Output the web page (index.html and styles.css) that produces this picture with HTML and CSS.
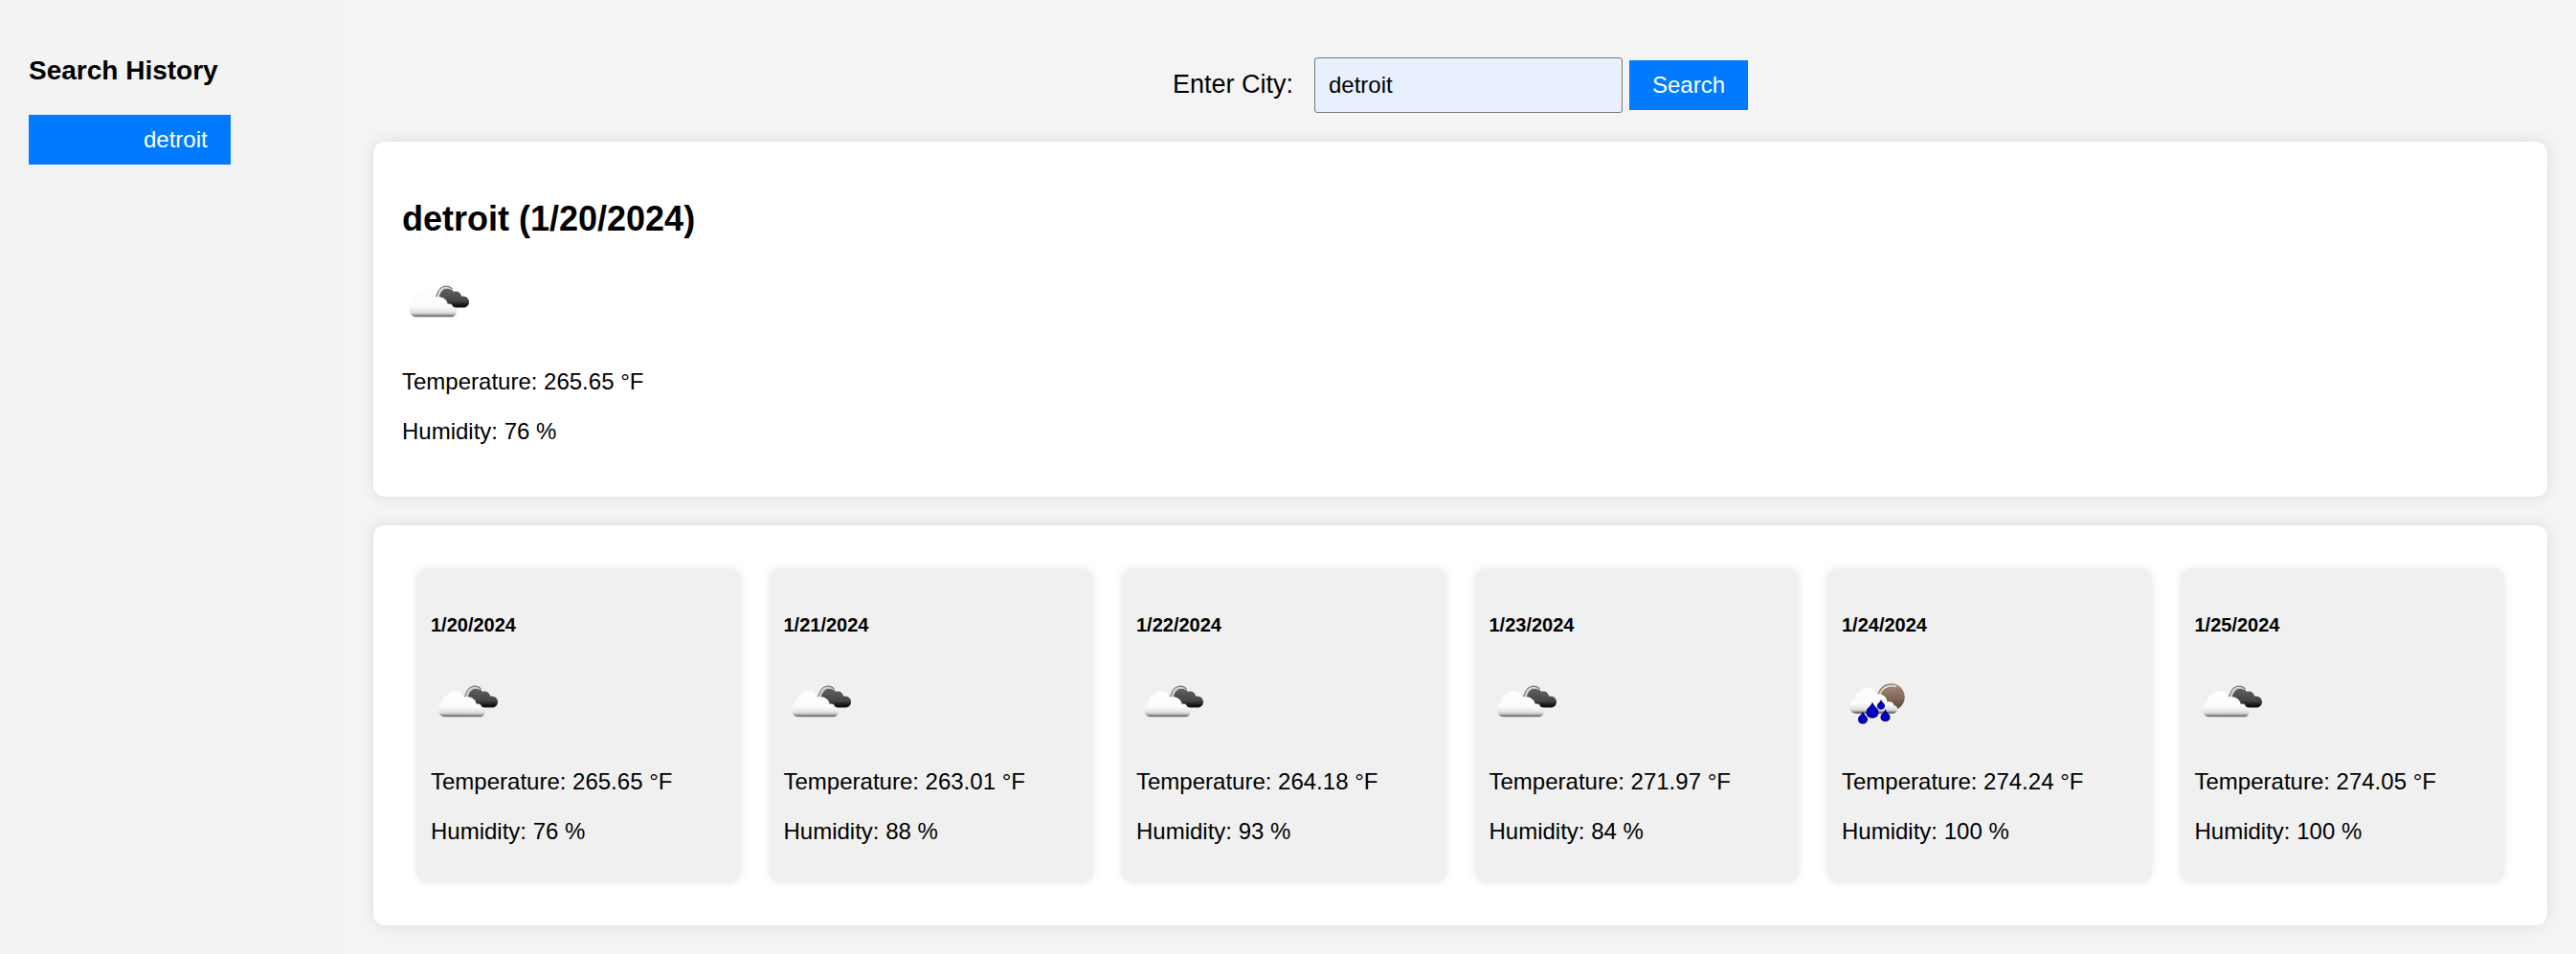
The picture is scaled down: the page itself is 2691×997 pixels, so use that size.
FILE: index.html
```html
<!DOCTYPE html>
<html lang="en">
<head>
<meta charset="utf-8">
<title>Weather Dashboard</title>
<link rel="stylesheet" href="styles.css">
</head>
<body>
<svg class="sprite" aria-hidden="true">
  <defs>
    <linearGradient id="white-cloud" x1="0" y1="0" x2="0" y2="1">
      <stop offset="0" stop-color="#fff"/>
      <stop offset="0.6" stop-color="#fbfbfb"/>
      <stop offset="0.8" stop-color="#e4e4e4"/>
      <stop offset="0.88" stop-color="#c4c4c4"/>
      <stop offset="0.94" stop-color="#777"/>
      <stop offset="1" stop-color="#808080"/>
    </linearGradient>
    <linearGradient id="dark-cloud" x1="0" y1="0" x2="0" y2="1">
      <stop offset="0" stop-color="#626262"/>
      <stop offset="0.65" stop-color="#444"/>
      <stop offset="0.9" stop-color="#101010"/>
      <stop offset="1" stop-color="#222"/>
    </linearGradient>
    <linearGradient id="moon" x1="0" y1="0" x2="0" y2="1">
      <stop offset="0" stop-color="#a58f80"/>
      <stop offset="0.5" stop-color="#85695a"/>
      <stop offset="1" stop-color="#553d30"/>
    </linearGradient>
    <radialGradient id="drop" cx="0.5" cy="0.6" r="0.55">
      <stop offset="0" stop-color="#0000e0"/>
      <stop offset="0.5" stop-color="#0000b4"/>
      <stop offset="1" stop-color="#00006a"/>
    </radialGradient>
    <filter id="soft" x="-10%" y="-10%" width="120%" height="120%"><feGaussianBlur stdDeviation="0.5"/></filter>
  </defs>
  <symbol id="broken-clouds" viewBox="0 0 75 75">
    <g filter="url(#soft)">
      <path d="M39 31C39 25 42 21.500 46 21.500C50 21 53 22.500 54 25C58 23.500 61.500 26 62 29.500C67 29 70 32 70 35.500C70 39 67.500 41.500 64 41.500H46Z" fill="url(#dark-cloud)"/>
      <path d="M37 30.500C39.500 29 38.500 24.500 43 22C46 20.500 49 20.800 51.500 22.500" fill="none" stroke="#c8c8c8" stroke-width="1.500"/>
      <path d="M35 30.500C37.500 28.500 36.500 23 42 20.300C46 18.300 50 19.300 52.500 22" fill="none" stroke="#777" stroke-width="1.200"/>
      <path d="M15.500 51.500C11 51.500 8 48.500 8 43.500C8 39.500 10 36.500 13 35.500C12 31.500 14 28.500 18 28C20 24.500 23 24 26 24C30 24 33.500 26.500 34.500 30.500C42 29.500 47 33 47.500 38C51.500 37 53 39 53 41C56 41 57.500 43.500 57 46C56.500 49.500 54 51.500 51 51.500Z" fill="url(#white-cloud)" stroke="#efefef" stroke-width="0.500"/>
    </g>
  </symbol>
  <symbol id="rain" viewBox="0 0 75 75">
    <g filter="url(#soft)">
      <circle cx="51.500" cy="30.500" r="14.200" fill="url(#moon)"/>
      <path d="M39.500 29C41 21 49 17 57 19.500" fill="none" stroke="#e9e1db" stroke-width="1.600"/>
      <path d="M15.500 48C11 47.500 8 44.500 8 40.500C8 36.500 10.500 34 14 33C13 29 15 25.500 19 25C21.500 22 24 21 27 21C31.500 21 34.500 23.500 35.500 27.500C42 26.500 47 30 47.500 35.500C51 34.500 54 36 54.500 39C57 39.500 58.500 41 58 43.500C57.500 46.500 55 48 52 48Z" fill="url(#white-cloud)"/>
      <g fill="url(#drop)">
        <path d="M22 45.500C23 49 27 50.500 27 53.500C27 56.700 24.700 58.500 22 58.500S17 56.700 17 53.500C17 50.500 21 49 22 45.500Z"/>
        <path d="M32 35.500C33.500 40.500 38.500 42 38.500 46.500C38.500 50.300 35.700 52.500 32 52.500S25.500 50.300 25.500 46.500C25.500 42 30.500 40.500 32 35.500Z"/>
        <path d="M41 33C42 36 45 37 45 39.500C45 42.300 43.200 43.500 41 43.500S37 42.300 37 39.500C37 37 40 36 41 33Z"/>
        <path d="M45.500 43C46.500 47 50.500 48 50.500 51.500C50.500 54.500 48.200 56 45.500 56S40.500 54.500 40.500 51.500C40.500 48 44.500 47 45.500 43Z"/>
      </g>
    </g>
  </symbol>
</svg>

<aside class="sidebar">
  <h3 class="sidebar-title">Search History</h3>
  <button class="button history-button" type="button">detroit</button>
</aside>

<main class="content">
  <form class="search-form">
    <label class="search-label" for="city">Enter City:</label>
    <input class="search-input" id="city" type="text" value="detroit">
    <button class="button" type="button">Search</button>
  </form>

  <section class="panel">
    <h2 class="city-title">detroit (1/20/2024)</h2>
    <svg class="weather-icon" role="img" aria-label="Broken clouds"><use href="#broken-clouds"/></svg>
    <p class="reading">Temperature: 265.65 °F</p>
    <p class="reading">Humidity: 76 %</p>
  </section>

  <section class="panel forecast">
    <article class="day">
      <h5 class="day-title">1/20/2024</h5>
      <svg class="weather-icon" role="img" aria-label="Broken clouds"><use href="#broken-clouds"/></svg>
      <p class="reading">Temperature: 265.65 °F</p>
      <p class="reading">Humidity: 76 %</p>
    </article>
    <article class="day">
      <h5 class="day-title">1/21/2024</h5>
      <svg class="weather-icon" role="img" aria-label="Broken clouds"><use href="#broken-clouds"/></svg>
      <p class="reading">Temperature: 263.01 °F</p>
      <p class="reading">Humidity: 88 %</p>
    </article>
    <article class="day">
      <h5 class="day-title">1/22/2024</h5>
      <svg class="weather-icon" role="img" aria-label="Broken clouds"><use href="#broken-clouds"/></svg>
      <p class="reading">Temperature: 264.18 °F</p>
      <p class="reading">Humidity: 93 %</p>
    </article>
    <article class="day">
      <h5 class="day-title">1/23/2024</h5>
      <svg class="weather-icon" role="img" aria-label="Broken clouds"><use href="#broken-clouds"/></svg>
      <p class="reading">Temperature: 271.97 °F</p>
      <p class="reading">Humidity: 84 %</p>
    </article>
    <article class="day">
      <h5 class="day-title">1/24/2024</h5>
      <svg class="weather-icon" role="img" aria-label="Rain"><use href="#rain"/></svg>
      <p class="reading">Temperature: 274.24 °F</p>
      <p class="reading">Humidity: 100 %</p>
    </article>
    <article class="day">
      <h5 class="day-title">1/25/2024</h5>
      <svg class="weather-icon" role="img" aria-label="Broken clouds"><use href="#broken-clouds"/></svg>
      <p class="reading">Temperature: 274.05 °F</p>
      <p class="reading">Humidity: 100 %</p>
    </article>
  </section>
</main>
</body>
</html>
```
FILE: styles.css
```css
* {
  box-sizing: border-box;
}

body {
  display: flex;
  min-height: 100vh;
  margin: 0;
  background: #f4f4f4;
  color: #000;
  font-family: Arial, "Liberation Sans", sans-serif;
  font-size: 24px;
  line-height: 28px;
}

.sprite {
  position: absolute;
  width: 0;
  height: 0;
}

.sidebar {
  flex: 0 0 360px;
  padding: 30px;
  background: #f3f3f3;
}

.sidebar-title {
  margin: 28px 0 30px;
  font-size: 28px;
  line-height: 32px;
}

.button {
  padding: 12px 24px;
  border: 0;
  background: #007bff;
  color: #fff;
  font: inherit;
  cursor: pointer;
}

.history-button {
  padding-left: 120px;
}

.content {
  display: flex;
  flex: 1;
  flex-direction: column;
  gap: 30px;
  min-width: 0;
  padding: 60px 30px 30px;
}

.search-form {
  display: flex;
  align-items: center;
  justify-content: center;
  gap: 7px;
}

.search-label {
  margin-right: 15px;
  padding-bottom: 2px;
  font-size: 27px;
}

.search-input {
  width: 322px;
  height: 58px;
  padding: 0 14px;
  border: 1px solid #767676;
  border-radius: 3px;
  background: #e8f0fe;
  color: #000;
  font: inherit;
}

.panel {
  padding: 30px;
  border-radius: 12px;
  background: #fff;
  box-shadow: 0 0 15px rgba(0, 0, 0, 0.1);
}

.city-title {
  margin: 30px 0;
  font-size: 36px;
  line-height: 42px;
}

.weather-icon {
  display: block;
  width: 75px;
  height: 75px;
  margin-bottom: 30px;
}

.reading {
  margin: 24px 0;
}

.forecast {
  display: flex;
}

.day {
  flex: 1;
  margin: 15px;
  padding: 15px;
  border-radius: 12px;
  background: #f0f0f0;
  box-shadow: 0 0 8px rgba(0, 0, 0, 0.1);
}

.day-title {
  margin: 33px 0;
  font-size: 20px;
  line-height: 23px;
}
```
